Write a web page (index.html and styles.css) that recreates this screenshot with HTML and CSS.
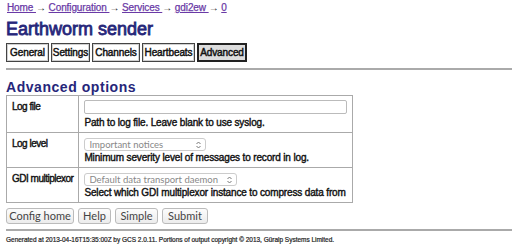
FILE: index.html
```html
<!DOCTYPE html>
<html>
<head>
<meta charset="utf-8">
<link rel="stylesheet" href="styles.css">
</head>
<body>
<div class="crumbs"><a href="#">Home </a> → <a href="#">Configuration </a> → <a href="#">Services </a> → <a href="#">gdi2ew </a> → <a href="#">0</a></div>
<h1 class="title">Earthworm sender</h1>
<div class="tabs">
  <span class="tab t1">General</span><span class="tab t2">Settings</span><span class="tab t3">Channels</span><span class="tab t4">Heartbeats</span><span class="tab t5 active">Advanced</span>
</div>
<hr class="rule">
<h2 class="section">Advanced options</h2>
<table class="opts">
  <tr>
    <th>Log file</th>
    <td><div class="text"></div><div class="help">Path to log file. Leave blank to use syslog.</div></td>
  </tr>
  <tr>
    <th>Log level</th>
    <td><div class="select sel1"><span>Important notices</span><svg class="arrows" width="5" height="8" viewBox="0 0 5 8"><path d="M0.5 3 L2.5 1 L4.5 3 M0.5 5 L2.5 7 L4.5 5" fill="none" stroke="#777" stroke-width="1"/></svg></div><div class="help">Minimum severity level of messages to record in log.</div></td>
  </tr>
  <tr>
    <th>GDI multiplexor</th>
    <td><div class="select sel2"><span>Default data transport daemon</span><svg class="arrows" width="5" height="8" viewBox="0 0 5 8"><path d="M0.5 3 L2.5 1 L4.5 3 M0.5 5 L2.5 7 L4.5 5" fill="none" stroke="#777" stroke-width="1"/></svg></div><div class="help">Select which GDI multiplexor instance to compress data from</div></td>
  </tr>
</table>
<div class="buttons">
  <span class="btn b1">Config home</span><span class="btn b2">Help</span><span class="btn b3">Simple</span><span class="btn b4">Submit</span>
</div>
<hr class="rule foot-rule">
<div class="footer">Generated at 2013-04-16T15:35:00Z by GCS 2.0.11. Portions of output copyright © 2013, Güralp Systems Limited.</div>
</body>
</html>
```
FILE: styles.css
```css
html, body { margin: 0; padding: 0; background: #fff; }
body {
  padding: 0 0 0 6px;
  font-family: "Liberation Sans Narrow", Arial, sans-serif;
  color: #111;
  font-size: 10px;
}
.crumbs {
  padding: 1px 0 0 1px;
  height: 14px;
  line-height: 14px;
  font-size: 10px;
  letter-spacing: -0.1px;
  color: #222;
}
.crumbs a { color: #6a3aa6; text-decoration: underline; -webkit-text-stroke: 0.25px #6a3aa6; }
.title {
  margin: 3px 0 0 0;
  font-size: 18px;
  line-height: 22px;
  color: #26267a;
  font-weight: normal;
  -webkit-text-stroke: 0.8px #26267a;
}
.tabs {
  margin-top: 3px;
  display: flex;
  gap: 2px;
}
.tab {
  box-sizing: border-box;
  border: 1px solid #444;
  box-shadow: inset 0 0 0 1px #d0d0d0;
  padding: 0;
  text-align: center;
  white-space: nowrap;
  font-size: 10px;
  line-height: 17px;
  letter-spacing: -0.1px;
  background: #fff;
  -webkit-text-stroke: 0.45px #111;
}
.t1 { width: 43px; }
.t2 { width: 39px; }
.t3 { width: 48px; }
.t4 { width: 53px; }
.t5 { width: 50px; }
.tab.active {
  background: #ddd;
  border: 2px solid #222;
  line-height: 15px;
  box-shadow: none;
}
.rule {
  margin: 6px 0 0 0;
  border: 0;
  height: 2px;
  background: #aaa;
}
.section {
  margin: 9px 0 0 0;
  font-family: "Liberation Sans", Arial, sans-serif;
  font-size: 14px;
  line-height: 16px;
  letter-spacing: 0.55px;
  color: #26267a;
  font-weight: bold;
}
.opts {
  margin-top: 0;
  border-collapse: collapse;
  width: 347px;
}
.opts th, .opts td {
  border: 1px solid #aaa;
  vertical-align: top;
  text-align: left;
  padding: 4px 5px 3px 5px;
  line-height: 13px;
  font-size: 10px;
  letter-spacing: -0.15px;
  font-weight: normal;
  -webkit-text-stroke: 0.4px #111;
}
.opts th { width: 61px; white-space: nowrap; letter-spacing: -0.5px; }
.text {
  box-sizing: border-box;
  width: 263px;
  height: 14px;
  border: 1px solid #bbb;
  border-radius: 2px;
  margin: 0 0 2px 0;
}
.select {
  display: flex;
  justify-content: space-between;
  align-items: center;
  box-sizing: border-box;
  height: 13px;
  border: 1px solid #ccc;
  border-radius: 3px;
  padding: 0 4px 0 4px;
  font-family: Lato, "Open Sans", sans-serif;
  font-size: 9.5px;
  letter-spacing: 0;
  color: #888;
  margin: 1px 0 0 0;
  -webkit-text-stroke: 0;
}
.sel1 { width: 122px; }
.sel2 { width: 153px; }
.help { line-height: 13px; white-space: nowrap; }
.buttons {
  display: flex;
  gap: 4px;
  margin-top: 5px;
}
.btn {
  box-sizing: border-box;
  height: 16px;
  border: 1px solid #bbb;
  border-radius: 3px;
  background: linear-gradient(#fcfcfc, #ececec);
  text-align: center;
  font-family: Lato, "Open Sans", sans-serif;
  font-size: 11px;
  line-height: 14px;
  color: #444;
}
.b1 { width: 68px; }
.b2 { width: 33px; }
.b3 { width: 43px; }
.b4 { width: 46px; }
.foot-rule { margin-top: 5px; }
.footer {
  margin-top: 4px;
  font-size: 6.5px;
  line-height: 9px;
  letter-spacing: -0.02px;
  color: #222;
  -webkit-text-stroke: 0.2px #222;
}
```
